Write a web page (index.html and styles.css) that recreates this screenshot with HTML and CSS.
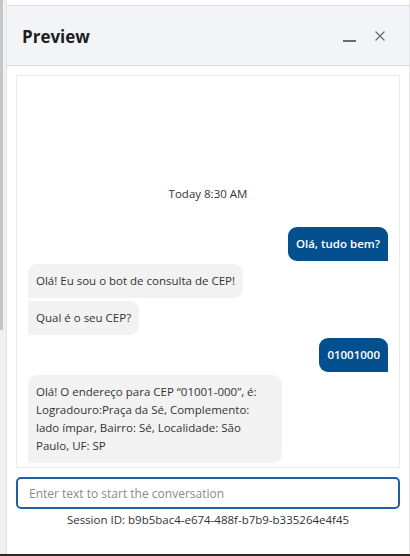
FILE: index.html
```html
<!DOCTYPE html>
<html lang="pt">
<head>
    <meta charset="UTF-8">
    <title>Preview</title>
    <link rel="stylesheet" href="styles.css">
</head>
<body>
    <div class="gutter">
        <div class="gutter-thumb"></div>
    </div>
    <div class="panel">
        <div class="panel-top"></div>
        <div class="header">
            <h1>Preview</h1>
            <div class="header-actions">
                <span class="btn-min"></span>
                <svg class="btn-close" width="12" height="12" viewBox="0 0 12 12">
                    <path d="M1.5 1.5 L10.5 10.5 M10.5 1.5 L1.5 10.5" stroke="#6b6b6b" stroke-width="1.3" fill="none"/>
                </svg>
            </div>
        </div>
        <div class="body">
            <div class="messages">
                <div class="timestamp">Today 8:30 AM</div>
                <div class="msg user">Olá, tudo bem?</div>
                <div class="msg bot">Olá! Eu sou o bot de consulta de CEP!</div>
                <div class="msg bot grouped">Qual é o seu CEP?</div>
                <div class="msg user">01001000</div>
                <div class="msg bot">Olá! O endereço para CEP “01001-000”, é: Logradouro:Praça da Sé, Complemento: lado ímpar, Bairro: Sé, Localidade: São Paulo, UF: SP</div>
            </div>
            <input type="text" class="chat-input" placeholder="Enter text to start the conversation">
            <div class="session">Session ID: b9b5bac4-e674-488f-b7b9-b335264e4f45</div>
        </div>
    </div>
</body>
</html>
```

FILE: styles.css
```css
/* Layout ogólny */
html, body {
    margin: 0;
    padding: 0;
}

body {
    width: 410px;
    height: 556px;
    display: flex;
    font-family: "Open Sans", "Noto Sans", sans-serif;
    color: #333;
    background-color: #fff;
    border-bottom: 2px solid #2f2b24;
    box-sizing: border-box;
    overflow: hidden;
}

.gutter {
    width: 6px;
    flex-shrink: 0;
    background-color: #f0f0f0;
}

.gutter-thumb {
    width: 3px;
    height: 330px;
    background-color: #c6c6c6;
}

.panel {
    flex: 1;
    display: flex;
    flex-direction: column;
    border-left: 1px solid #e2e2e2;
    border-right: 1px solid #e6e6e6;
}

.panel-top {
    height: 5px;
    background-color: #fff;
    border-bottom: 1px solid #dcdcdc;
}

/* Nagłówek */
.header {
    height: 59px;
    background-color: #f3f4f8;
    border-bottom: 1px solid #ddd8d2;
    display: flex;
    align-items: center;
    justify-content: space-between;
    padding: 0 23px 0 15px;
}

h1 {
    margin: 0;
    font-size: 17px;
    font-weight: bold;
    color: #1e1e1e;
    padding-top: 2px;
}

.header-actions {
    display: flex;
    align-items: center;
    gap: 18px;
}

.btn-min {
    width: 13px;
    height: 2px;
    background-color: #6b6b6b;
    margin-top: 11px;
}

/* Okno rozmowy */
.body {
    flex: 1;
    display: flex;
    flex-direction: column;
    padding: 9px 9px 0 9px;
}

.messages {
    height: 387px;
    border: 1px solid #ececec;
    display: flex;
    flex-direction: column;
    justify-content: flex-end;
    gap: 3px;
    padding: 0 11px 4px 11px;
}

.timestamp {
    text-align: center;
    font-size: 11.5px;
    color: #333;
    margin-bottom: 23px;
}

.msg {
    font-size: 11.5px;
    line-height: 18px;
    padding: 8px 8px;
    max-width: 238px;
}

.bot {
    align-self: flex-start;
    background-color: #f2f2f2;
    color: #333;
    border-radius: 9px 9px 9px 0;
}

.bot.grouped {
    border-radius: 0 9px 9px 0;
}

.user {
    align-self: flex-end;
    background-color: #04508e;
    color: #fff;
    font-weight: 600;
    border-radius: 9px 9px 0 9px;
}

.chat-input {
    margin-top: 9px;
    height: 32px;
    box-sizing: border-box;
    border: 2px solid #1f5fa8;
    border-radius: 5px;
    padding: 0 11px;
    font-family: inherit;
    font-size: 12px;
    color: #333;
    outline: none;
}

.chat-input::placeholder {
    color: #8a8a8a;
}

.session {
    text-align: center;
    font-size: 11.5px;
    color: #333;
    margin-top: 3px;
}
```
